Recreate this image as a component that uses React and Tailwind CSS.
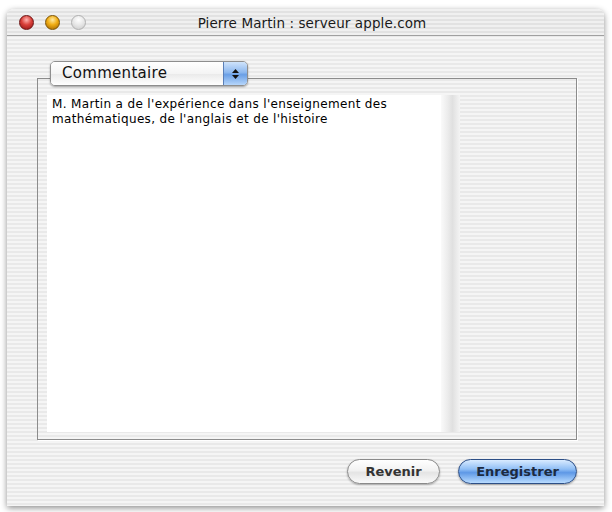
import React from 'react';

const stripes = 'bg-[image:repeating-linear-gradient(180deg,#f5f5f5_0px,#f5f5f5_2px,#e9e9e9_2px,#e9e9e9_4px)]';

const Light = ({ className }) => (
  <span className={`w-[15px] h-[15px] rounded-full border ${className}`} />
);

const App = () => {
  return (
    <div className="w-[612px] h-[512px] bg-white pt-[9px] pl-[7px] font-['DejaVu_Sans',sans-serif]">
      <div className={`w-[597px] h-[497px] rounded-t-[7px] flex flex-col overflow-hidden shadow-[0_2px_6px_rgba(0,0,0,0.45)] ${stripes}`}>
        {/* title bar */}
        <div className="h-[27px] shrink-0 flex items-center relative border-b border-[#a0a0a0] bg-[image:repeating-linear-gradient(180deg,#f0f0f0_0px,#f0f0f0_2px,#e2e2e2_2px,#e2e2e2_4px)]">
          <div className="flex items-center gap-[11px] pl-[12px] pt-[1px]">
            <Light className="border-[#6e1414] bg-[radial-gradient(circle_at_50%_30%,#ffb3b0_0%,#d9403a_45%,#8c1212_100%)]" />
            <Light className="border-[#7d5200] bg-[radial-gradient(circle_at_50%_30%,#ffe9a0_0%,#f0ac12_45%,#9a6000_100%)]" />
            <Light className="border-[#b0b0b0] bg-[radial-gradient(circle_at_50%_30%,#ffffff_0%,#e6e6e6_50%,#c8c8c8_100%)]" />
          </div>
          <div className="flex-1 text-center text-[13.5px] tracking-[0.1px] text-[#1a1a1a] pr-[66px] pt-[2px]">
            Pierre Martin : serveur apple.com
          </div>
        </div>

        {/* content */}
        <div className="flex-1 flex flex-col pl-[30px] pr-[27px] pt-[42px]">
          <div className="relative h-[362px] border border-[#8c8c8c] shadow-[1px_1px_0_#ffffff] pt-[16px] pl-[9px] pb-[7px] flex">
            <div className="absolute -top-[18px] left-[12px] h-[25px] w-[198px] rounded-[5px] border border-[#8e8e8e] shadow-[0_1px_2px_rgba(0,0,0,0.35)] flex overflow-hidden">
              <div className="flex-1 flex items-center pl-[11px] text-[15px] tracking-[0.3px] text-[#111] bg-[linear-gradient(180deg,#ffffff_0%,#f4f4f4_50%,#e9e9e9_51%,#ffffff_100%)]">
                Commentaire
              </div>
              <div className="w-[24px] flex flex-col items-center justify-center gap-[2px] border-l border-[#5a7fb8] bg-[linear-gradient(180deg,#cfe3fb_0%,#8db8ef_45%,#6a9fe6_55%,#b6d6fb_100%)]">
                <svg width="7" height="4" viewBox="0 0 7 4"><path d="M3.5 0L7 4H0z" fill="#111" /></svg>
                <svg width="7" height="4" viewBox="0 0 7 4"><path d="M0 0h7L3.5 4z" fill="#111" /></svg>
              </div>
            </div>
            <div className="w-[394px] h-full bg-white pl-[5px] pt-[2px] text-[12px] tracking-[0.35px] leading-[15px] text-black">
              M. Martin a de l'expérience dans l'enseignement des<br />
              mathématiques, de l'anglais et de l'histoire
            </div>
            <div className="w-[19px] h-full bg-[linear-gradient(90deg,#fafafa_0%,#ececec_35%,#e0e0e0_60%,#f4f4f4_100%)]" />
          </div>

          <div className="flex justify-end gap-[18px] mt-[19px]">
            <button className="w-[93px] h-[25px] rounded-full border border-[#8a8a8a] text-[13px] font-semibold text-[#333] bg-[linear-gradient(180deg,#ffffff_0%,#f2f2f2_45%,#e4e4e4_55%,#fafafa_100%)] shadow-[0_1px_2px_rgba(0,0,0,0.3)]">
              Revenir
            </button>
            <button className="w-[119px] h-[25px] rounded-full border border-[#2d4f86] text-[13px] font-semibold text-[#1c2a40] bg-[linear-gradient(180deg,#d9ebff_0%,#8fbef5_40%,#5e98e6_55%,#b9dcff_100%)] shadow-[0_1px_2px_rgba(0,0,0,0.35)]">
              Enregistrer
            </button>
          </div>
        </div>
      </div>
    </div>
  );
};

export default App;
